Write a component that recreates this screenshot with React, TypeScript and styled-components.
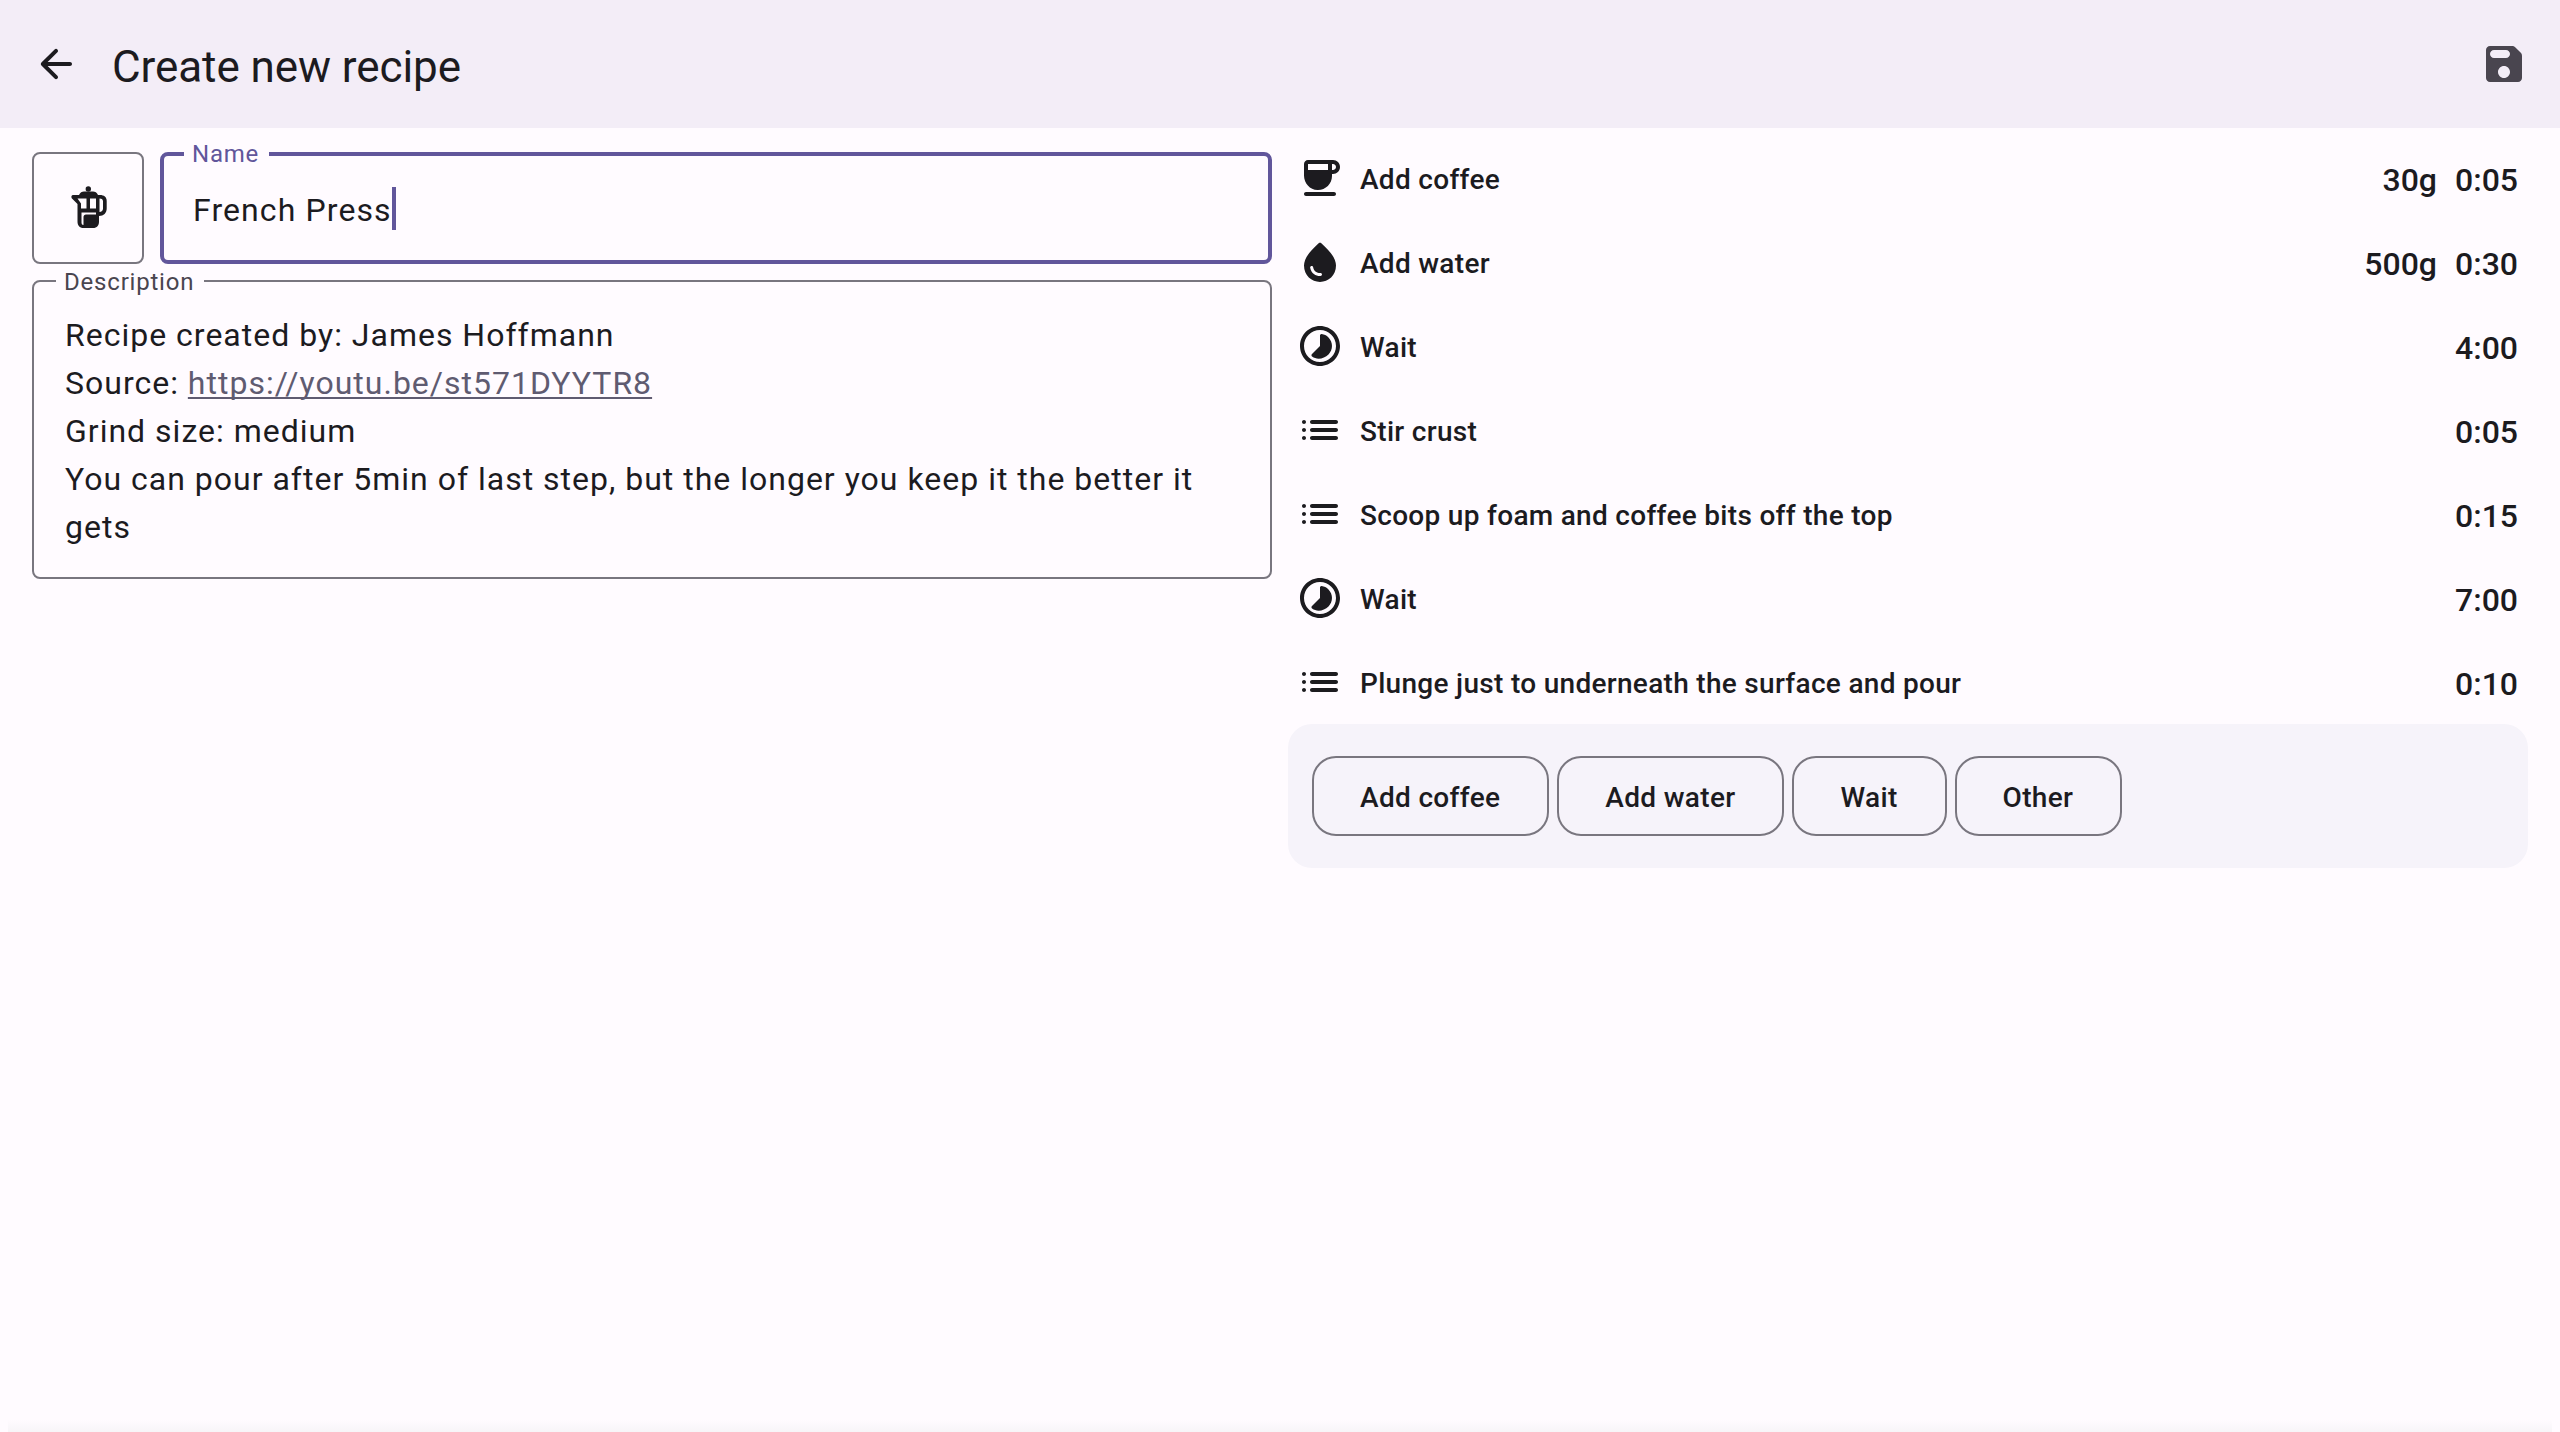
import React from "react";
import styled, { createGlobalStyle } from "styled-components";

const color = {
  surface: "#fffbff",
  bar: "#f3edf7",
  panel: "#f6f3fa",
  text: "#1c1b1f",
  muted: "#49454f",
  outline: "#79767f",
  primary: "#61569b",
  link: "#5f5b71",
};

const GlobalStyle = createGlobalStyle`
  * { box-sizing: border-box; }
  html, body { margin: 0; padding: 0; }
  body {
    background: ${color.surface};
    color: ${color.text};
    font-family: Roboto, "Liberation Sans", sans-serif;
  }
`;

const Page = styled.div`
  display: flex;
  flex-direction: column;
  width: 2560px;
  height: 1432px;
  overflow: hidden;
  background: ${color.surface};
`;

const AppBar = styled.header`
  display: flex;
  align-items: center;
  flex: none;
  height: 128px;
  padding: 0 32px;
  background: ${color.bar};
`;

const Title = styled.h1`
  flex: 1;
  margin: 5px 0 0 32px;
  font-size: 44px;
  line-height: 56px;
  font-weight: 400;
  letter-spacing: -0.08px;
`;

const IconButton = styled.button<{ $muted?: boolean }>`
  display: flex;
  padding: 0;
  border: 0;
  background: none;
  color: ${(p) => (p.$muted ? color.muted : color.text)};
`;

const Glyph = styled.svg`
  display: block;
  flex: none;
  width: 48px;
  height: 48px;
  fill: currentColor;
`;

const Content = styled.main`
  display: grid;
  grid-template-columns: 1240px 1240px;
  column-gap: 16px;
  flex: 1;
  align-items: start;
  padding: 0 32px;
`;

const Form = styled.section`
  display: flex;
  flex-direction: column;
  gap: 16px;
  padding-top: 24px;
`;

const NameRow = styled.div`
  display: flex;
  gap: 16px;
`;

const IconPicker = styled.button`
  display: flex;
  align-items: center;
  justify-content: center;
  width: 112px;
  height: 112px;
  padding: 0;
  border: 2px solid ${color.outline};
  border-radius: 8px;
  background: none;
  color: ${color.text};
`;

const Field = styled.div<{ $focused?: boolean; $height: number }>`
  position: relative;
  flex: 1 0 auto;
  height: ${(p) => p.$height}px;
  padding: ${(p) => (p.$focused ? "30px 29px 0" : "29px 30px 0 31px")};
  border: ${(p) => (p.$focused ? `4px solid ${color.primary}` : `2px solid ${color.outline}`)};
  border-radius: 8px;
`;

const FieldLabel = styled.span<{ $focused?: boolean }>`
  position: absolute;
  top: ${(p) => (p.$focused ? "-18px" : "-16px")};
  left: ${(p) => (p.$focused ? "20px" : "22px")};
  padding: 0 10px 0 8px;
  background: ${color.surface};
  color: ${(p) => (p.$focused ? color.primary : color.muted)};
  font-size: 24px;
  line-height: 32px;
  letter-spacing: 0.8px;
`;

const FieldText = styled.div`
  display: flex;
  align-items: center;
  font-size: 32px;
  line-height: 48px;
  letter-spacing: 1.1px;
`;

const Caret = styled.span`
  width: 4px;
  height: 43px;
  margin-bottom: 3px;
  background: ${color.primary};
`;

const Paragraph = styled.p`
  margin: 0;
  font-size: 32px;
  line-height: 48px;
  letter-spacing: 1px;
`;

const Link = styled.a`
  color: ${color.link};
  text-decoration: underline;
  text-decoration-thickness: 2px;
  text-decoration-skip-ink: none;
  text-underline-offset: 3px;
`;

const Steps = styled.section`
  display: flex;
  flex-direction: column;
  padding-top: 8px;
`;

const StepRow = styled.div`
  display: flex;
  align-items: center;
  height: 84px;
  padding: 0 10px 0 8px;
  font-weight: 500;
`;

const StepName = styled.span`
  flex: 1;
  margin: 4px 0 0 16px;
  font-size: 28px;
  line-height: 40px;
  letter-spacing: 0.3px;
`;

const StepValue = styled.span`
  margin: 4px 0 0 18px;
  font-size: 32px;
  line-height: 48px;
  letter-spacing: 0;
`;

const AddPanel = styled.div`
  display: flex;
  align-items: center;
  gap: 8px;
  height: 144px;
  padding: 0 24px;
  border-radius: 24px;
  background: ${color.panel};
`;

const AddButton = styled.button`
  height: 80px;
  padding: 3px 47px 0 46px;
  border: 2px solid ${color.outline};
  border-radius: 24px;
  background: none;
  color: ${color.text};
  font: 500 28px/40px Roboto, "Liberation Sans", sans-serif;
  letter-spacing: 0.33px;
`;

const BottomShade = styled.div`
  flex: none;
  height: 12px;
  margin: 0 8px;
  background: linear-gradient(to bottom, #fffbff, #f7f5f8);
`;

const paths = {
  back: "M19 11H7.83l4.88-4.88c.39-.39.39-1.03 0-1.42-.39-.39-1.02-.39-1.41 0l-6.59 6.59c-.39.39-.39 1.02 0 1.41l6.59 6.59c.39.39 1.02.39 1.41 0 .39-.39.39-1.02 0-1.41L7.83 13H19c.55 0 1-.45 1-1s-.45-1-1-1z",
  save: "M17.59 3.59c-.38-.38-.89-.59-1.42-.59H5c-1.11 0-2 .9-2 2v14c0 1.1.9 2 2 2h14c1.1 0 2-.9 2-2V7.83c0-.53-.21-1.04-.59-1.41l-2.82-2.83zM12 19c-1.66 0-3-1.34-3-3s1.34-3 3-3 3 1.34 3 3-1.34 3-3 3zm1-10H7c-1.1 0-2-.9-2-2s.9-2 2-2h6c1.1 0 2 .9 2 2s-.9 2-2 2z",
  coffee:
    "M18.5 3H6c-1.1 0-2 .9-2 2v5.71c0 3.83 2.95 7.18 6.78 7.29 3.96.12 7.22-3.06 7.22-7v-1h.5c1.93 0 3.5-1.57 3.5-3.5S20.43 3 18.5 3zM16 5v3H6V5h10zm2.5 3H18V5h.5c.83 0 1.5.67 1.5 1.5S19.33 8 18.5 8zM5 19h14c.55 0 1 .45 1 1s-.45 1-1 1H5c-.55 0-1-.45-1-1s.45-1 1-1z",
  water:
    "M12.66 2.58c-.38-.33-.95-.33-1.33 0C6.45 6.88 4 10.62 4 13.8c0 4.98 3.8 8.2 8 8.2s8-3.22 8-8.2c0-3.18-2.45-6.92-7.34-11.22zM7.83 14c.37 0 .67.26.74.62.41 2.22 2.28 2.98 3.64 2.87.43-.02.79.32.79.75 0 .4-.32.73-.72.75-2.13.13-4.62-1.09-5.19-4.12-.08-.45.28-.87.74-.87z",
  wait: "M16.24 7.75c-.96-.96-2.16-1.53-3.4-1.7-.46-.06-.84.32-.84.79v5.15l-4 4c-.36.36-.36.95.04 1.27 2.36 1.8 5.98 1.2 8.2-1.02 2.34-2.34 2.34-6.15 0-8.49zM12 1.99c-5.52 0-10 4.48-10 10s4.48 10 10 10 10-4.48 10-10-4.48-10-10-10zm0 18c-4.42 0-8-3.58-8-8s3.58-8 8-8 8 3.58 8 8-3.58 8-8 8z",
  other:
    "M4 13c.55 0 1-.45 1-1s-.45-1-1-1-1 .45-1 1 .45 1 1 1zm0 4c.55 0 1-.45 1-1s-.45-1-1-1-1 .45-1 1 .45 1 1 1zm0-8c.55 0 1-.45 1-1s-.45-1-1-1-1 .45-1 1 .45 1 1 1zm4 4h12c.55 0 1-.45 1-1s-.45-1-1-1H8c-.55 0-1 .45-1 1s.45 1 1 1zm0 4h12c.55 0 1-.45 1-1s-.45-1-1-1H8c-.55 0-1 .45-1 1s.45 1 1 1zM7 8c0 .55.45 1 1 1h12c.55 0 1-.45 1-1s-.45-1-1-1H8c-.55 0-1 .45-1 1z",
};

const Icon = ({ name }: { name: keyof typeof paths }) => (
  <Glyph viewBox="0 0 24 24" aria-hidden>
    <path d={paths[name]} />
  </Glyph>
);

const FrenchPressIcon = () => (
  <Glyph viewBox="0 0 48 48" aria-hidden>
    <circle cx="24.3" cy="5" r="2.7" />
    <path
      fillRule="evenodd"
      d="M20 7.5h9c2 0 4 1 5 3.500h2c4 0 6.700 2 6.700 6v7.500c0 4.500-3 7.500-7.700 7.500v5.500c0 4-2 6.500-6 6.500h-9.500c-4 0-6-2.500-6-6.500v-17.500l-5-5c-1.800-1.500-1.300-4 .8-4h5.700c1-2.500 3-3.500 5-3.500zM13.500 14.500l3.500 5v5h5.500v-10zM26 14.500v10h6v-10zM35.500 14.500v13.500c2 0 3.500-1.200 3.500-3.500v-7c0-2-1-3-3.500-3zM17.500 28.500v10c0 1.700.7 2.500 2 2.500v-8c0-1.500 1-2.500 2.500-2.500h10v-2z"
    />
  </Glyph>
);

type Step = { icon: keyof typeof paths; name: string; weight?: string; time: string };

const steps: Step[] = [
  { icon: "coffee", name: "Add coffee", weight: "30g", time: "0:05" },
  { icon: "water", name: "Add water", weight: "500g", time: "0:30" },
  { icon: "wait", name: "Wait", time: "4:00" },
  { icon: "other", name: "Stir crust", time: "0:05" },
  { icon: "other", name: "Scoop up foam and coffee bits off the top", time: "0:15" },
  { icon: "wait", name: "Wait", time: "7:00" },
  { icon: "other", name: "Plunge just to underneath the surface and pour", time: "0:10" },
];

const stepTypes = ["Add coffee", "Add water", "Wait", "Other"];

export default function App() {
  return (
    <Page>
      <GlobalStyle />
      <AppBar>
        <IconButton aria-label="Back">
          <Icon name="back" />
        </IconButton>
        <Title>Create new recipe</Title>
        <IconButton $muted aria-label="Save">
          <Icon name="save" />
        </IconButton>
      </AppBar>
      <Content>
        <Form>
          <NameRow>
            <IconPicker aria-label="Recipe icon">
              <FrenchPressIcon />
            </IconPicker>
            <Field $focused $height={112}>
              <FieldLabel $focused>Name</FieldLabel>
              <FieldText>
                French Press
                <Caret />
              </FieldText>
            </Field>
          </NameRow>
          <Field $height={299}>
            <FieldLabel>Description</FieldLabel>
            <Paragraph>Recipe created by: James Hoffmann</Paragraph>
            <Paragraph>
              Source: <Link>https://youtu.be/st571DYYTR8</Link>
            </Paragraph>
            <Paragraph>Grind size: medium</Paragraph>
            <Paragraph>
              You can pour after 5min of last step, but the longer you keep it the better it gets
            </Paragraph>
          </Field>
        </Form>
        <Steps>
          {steps.map((step, i) => (
            <StepRow key={i}>
              <Icon name={step.icon} />
              <StepName>{step.name}</StepName>
              {step.weight && <StepValue>{step.weight}</StepValue>}
              <StepValue>{step.time}</StepValue>
            </StepRow>
          ))}
          <AddPanel>
            {stepTypes.map((label) => (
              <AddButton key={label}>{label}</AddButton>
            ))}
          </AddPanel>
        </Steps>
      </Content>
      <BottomShade />
    </Page>
  );
}
